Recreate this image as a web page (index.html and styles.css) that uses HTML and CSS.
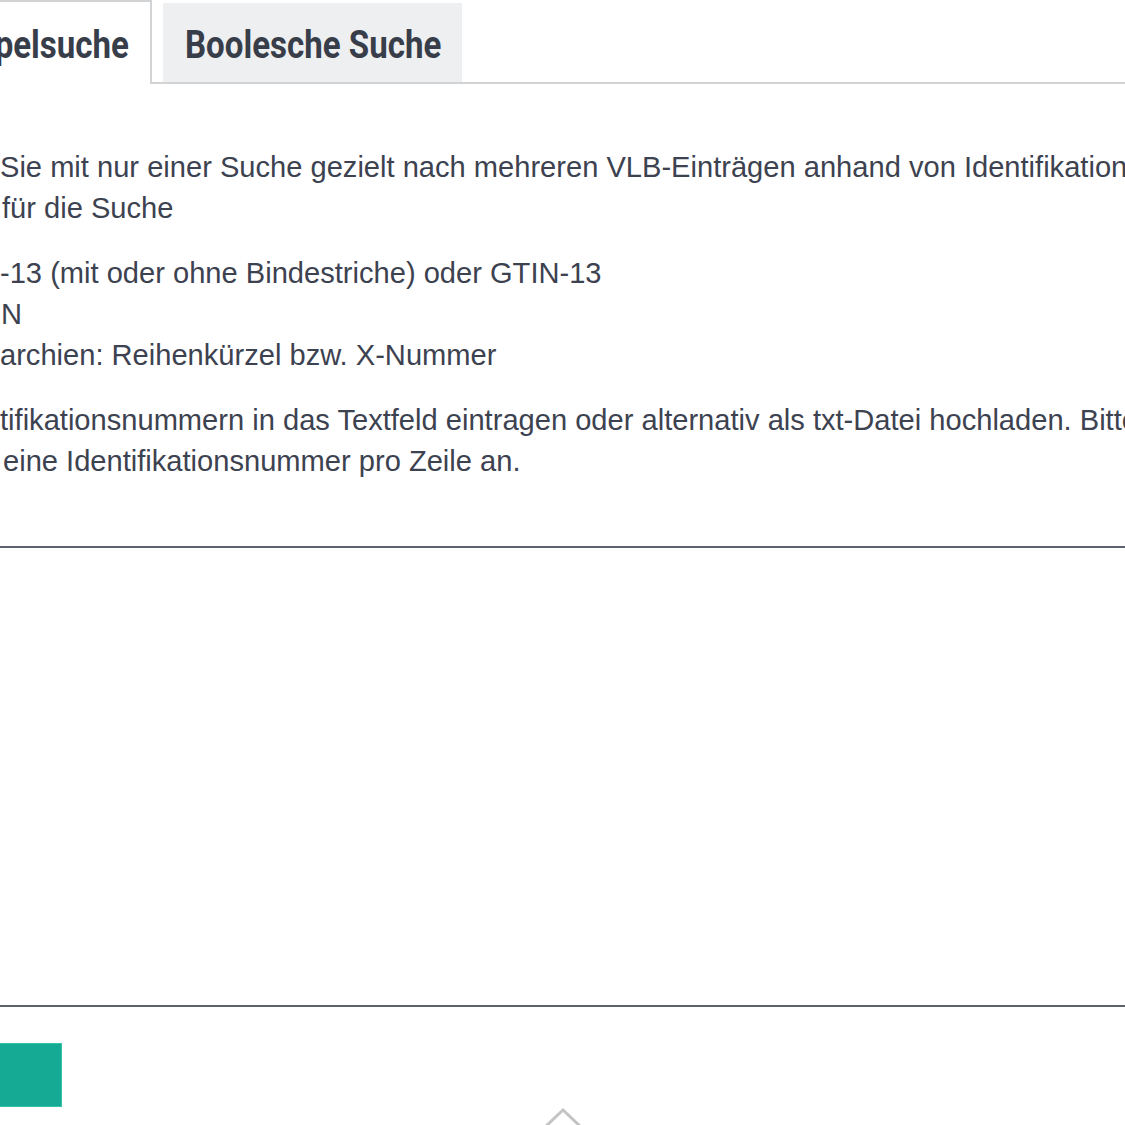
FILE: index.html
```html
<!DOCTYPE html>
<html lang="de">
<head>
<meta charset="utf-8">
<title>Stapelsuche</title>
<link rel="stylesheet" href="styles.css">
</head>
<body>
<div class="page">
  <div class="tabs">
    <div class="tab active"><span class="tab-label">Stapelsuche</span></div>
    <div class="tab second"><span class="tab-label">Boolesche Suche</span></div>
  </div>
  <div class="content">
    <p class="para first">
      <span class="line l-a">Sie mit nur einer Suche gezielt nach mehreren VLB-Einträgen anhand von Identifikationsnummern.</span>
      <span class="line l-b">für die Suche</span>
    </p>
    <ul class="ids">
      <li class="line l-c">-13 (mit oder ohne Bindestriche) oder GTIN-13</li>
      <li class="line l-d">N</li>
      <li class="line l-e">archien: Reihenkürzel bzw. X-Nummer</li>
    </ul>
    <p class="para">
      <span class="line l-f">tifikationsnummern in das Textfeld eintragen oder alternativ als txt-Datei hochladen. Bitte geben Sie</span>
      <span class="line l-g">eine Identifikationsnummer pro Zeile an.</span>
    </p>
    <textarea class="ids-input" aria-label="Identifikationsnummern"></textarea>
    <button class="submit" type="button" aria-label="Suchen"></button>
  </div>
  <a class="to-top" href="#" aria-label="Nach oben">
    <svg width="50" height="24" viewBox="0 0 50 24"><polyline points="4,22 23,4 42,22" fill="none" stroke="#c4c4c4" stroke-width="3"/></svg>
  </a>
</div>
</body>
</html>
```
FILE: styles.css
```css
html, body {
  margin: 0;
  padding: 0;
  background: #ffffff;
}
body {
  width: 1125px;
  height: 1125px;
  overflow: hidden;
  font-family: "Liberation Sans", Arial, sans-serif;
  color: #3d4250;
}
.page {
  position: relative;
  width: 1125px;
  height: 1125px;
  overflow: hidden;
}
.tabs {
  display: flex;
  align-items: flex-end;
  height: 82px;
  border-bottom: 2px solid #d2d3d5;
}
.tab {
  display: flex;
  align-items: center;
  white-space: nowrap;
  font-family: "Roboto", "Liberation Sans", sans-serif;
  font-weight: bold;
  font-size: 38px;
  color: #383d4a;
  background: #eeeff1;
}
.tab-label {
  display: inline-block;
  transform: scaleX(0.87);
}
.tab.second {
  width: 299px;
  height: 79px;
  box-sizing: border-box;
  padding-top: 4px;
  justify-content: flex-start;
}
.tab.second .tab-label {
  transform-origin: left center;
  margin-left: 22px;
}
.tab.active {
  width: 152px;
  height: 84px;
  margin-bottom: -2px;
  box-sizing: border-box;
  justify-content: flex-end;
  background: #ffffff;
  border-top: 2px solid #d2d3d5;
  border-right: 2px solid #d2d3d5;
  margin-right: 11px;
  padding-right: 21px;
  padding-bottom: 2px;
  padding-top: 6px;
}
.tab.active .tab-label {
  transform-origin: right center;
}
.content {
  padding-top: 63px;
}
.para {
  margin: 0 0 24px 0;
}
.line {
  display: block;
  white-space: nowrap;
  font-size: 29.1px;
  line-height: 41px;
}
.ids {
  list-style: none;
  margin: 0 0 24px 0;
  padding: 0;
}
.l-a { padding-left: 0; }
.l-b { padding-left: 2px; }
.l-c { padding-left: 0; }
.l-d { padding-left: 1px; }
.l-e { padding-left: 0; }
.l-f { padding-left: 0; }
.l-g { padding-left: 3px; }
.ids-input {
  display: block;
  box-sizing: border-box;
  margin: 64px 0 0 -30px;
  width: 1200px;
  height: 461px;
  border: 2px solid #5d626c;
  background: #ffffff;
  resize: none;
  outline: none;
}
.submit {
  display: block;
  margin: 36px 0 0 -100px;
  width: 162px;
  height: 64px;
  background: #14aa93;
  border: 1px solid #35c2ab;
  padding: 0;
}
.to-top {
  position: absolute;
  left: 540px;
  top: 1106px;
  display: block;
  width: 50px;
  height: 24px;
}
```
